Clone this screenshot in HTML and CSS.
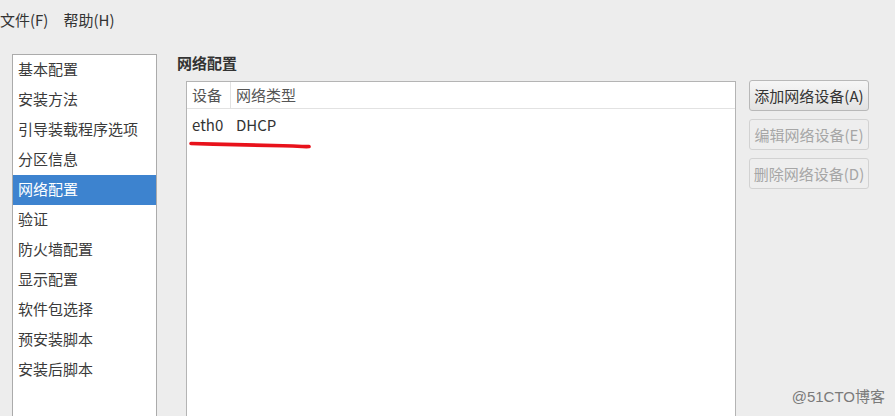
FILE: index.html
```html
<!DOCTYPE html>
<html lang="zh-CN">
<head>
<meta charset="utf-8">
<title>网络配置</title>
<link rel="stylesheet" href="styles.css">
</head>
<body>
<div class="menubar">
  <span class="menu-item">文件(F)</span>
  <span class="menu-item">帮助(H)</span>
</div>
<div class="main">
  <ul class="sidebar">
    <li>基本配置</li>
    <li>安装方法</li>
    <li>引导装载程序选项</li>
    <li>分区信息</li>
    <li class="selected">网络配置</li>
    <li>验证</li>
    <li>防火墙配置</li>
    <li>显示配置</li>
    <li>软件包选择</li>
    <li>预安装脚本</li>
    <li>安装后脚本</li>
  </ul>
  <div class="panel">
    <div class="panel-title">网络配置</div>
    <div class="panel-body">
      <div class="table">
        <div class="thead">
          <div class="col col-dev">设备</div>
          <div class="col col-type">网络类型</div>
        </div>
        <div class="trow">
          <div class="col col-dev">eth0</div>
          <div class="col col-type">DHCP</div>
        </div>
        <svg class="underline" width="126" height="10" viewBox="0 0 126 10">
          <path d="M3 3.5 C 35 4.5, 70 5, 95 5.8 S 118 6.8, 121 6.5" fill="none" stroke="#e8121b" stroke-width="3.6" stroke-linecap="round"/>
        </svg>
      </div>
      <div class="buttons">
        <button class="btn">添加网络设备(A)</button>
        <button class="btn" disabled>编辑网络设备(E)</button>
        <button class="btn" disabled>删除网络设备(D)</button>
      </div>
    </div>
  </div>
</div>
<div class="watermark">@51CTO博客</div>
</body>
</html>
```

FILE: styles.css
```css
* { box-sizing: border-box; }
html, body { margin: 0; padding: 0; }
body {
  background: #ededed;
  font-family: "Noto Sans CJK SC", "DejaVu Sans", sans-serif;
  font-size: 15px;
  color: #3a3a3a;
  width: 895px;
  height: 416px;
  overflow: hidden;
  position: relative;
}
.menubar {
  height: 40px;
  display: flex;
  align-items: center;
  gap: 15px;
  padding-left: 0;
}
.menu-item { line-height: 18px; color: #333; }
.main {
  display: flex;
  align-items: flex-start;
  padding-left: 12px;
  margin-top: 14px;
}
.sidebar {
  list-style: none;
  margin: 0;
  padding: 0;
  width: 145px;
  height: 362px;
  background: #fff;
  border: 1px solid #ababab;
  border-bottom: none;
}
.sidebar li {
  height: 30px;
  line-height: 27px;
  padding-left: 5px;
  white-space: nowrap;
}
.sidebar li.selected {
  background: #3d83cf;
  color: #fff;
}
.panel {
  margin-left: 20px;
  flex: 1;
}
.panel-title {
  font-weight: bold;
  line-height: 18px;
  height: 27px;
  color: #333;
}
.panel-body {
  display: flex;
  align-items: flex-start;
  gap: 13px;
  padding-left: 9px;
}
.table {
  position: relative;
  width: 550px;
  height: 335px;
  background: #fff;
  border: 1px solid #b4b4b4;
  border-bottom: none;
}
.thead {
  display: flex;
  height: 27px;
  border-bottom: 1px solid #e2e2e2;
  color: #555;
}
.thead .col { line-height: 25px; }
.thead .col-dev { border-right: 1px solid #e2e2e2; }
.col-dev { width: 44px; padding-left: 5px; }
.col-type { padding-left: 5px; }
.trow {
  display: flex;
  padding-top: 7px;
  line-height: 18px;
  color: #333;
}
.underline {
  position: absolute;
  left: 1px;
  top: 58px;
}
.buttons {
  display: flex;
  flex-direction: column;
  gap: 8px;
  margin-top: -1px;
}
.btn {
  width: 120px;
  height: 31px;
  padding: 0;
  font-family: inherit;
  font-size: 15px;
  color: #333;
  background: linear-gradient(#f6f6f6, #e2e2e2);
  border: 1px solid #b8b8b8;
  border-radius: 3px;
  white-space: nowrap;
}
.btn:disabled {
  color: #a6a6a6;
  background: #eeeeee;
  border-color: #d2d2d2;
}
.watermark {
  position: absolute;
  right: 10px;
  bottom: 10px;
  font-family: "Liberation Sans", "Noto Sans CJK SC", sans-serif;
  font-size: 15px;
  color: #7a7a7a;
}
```
